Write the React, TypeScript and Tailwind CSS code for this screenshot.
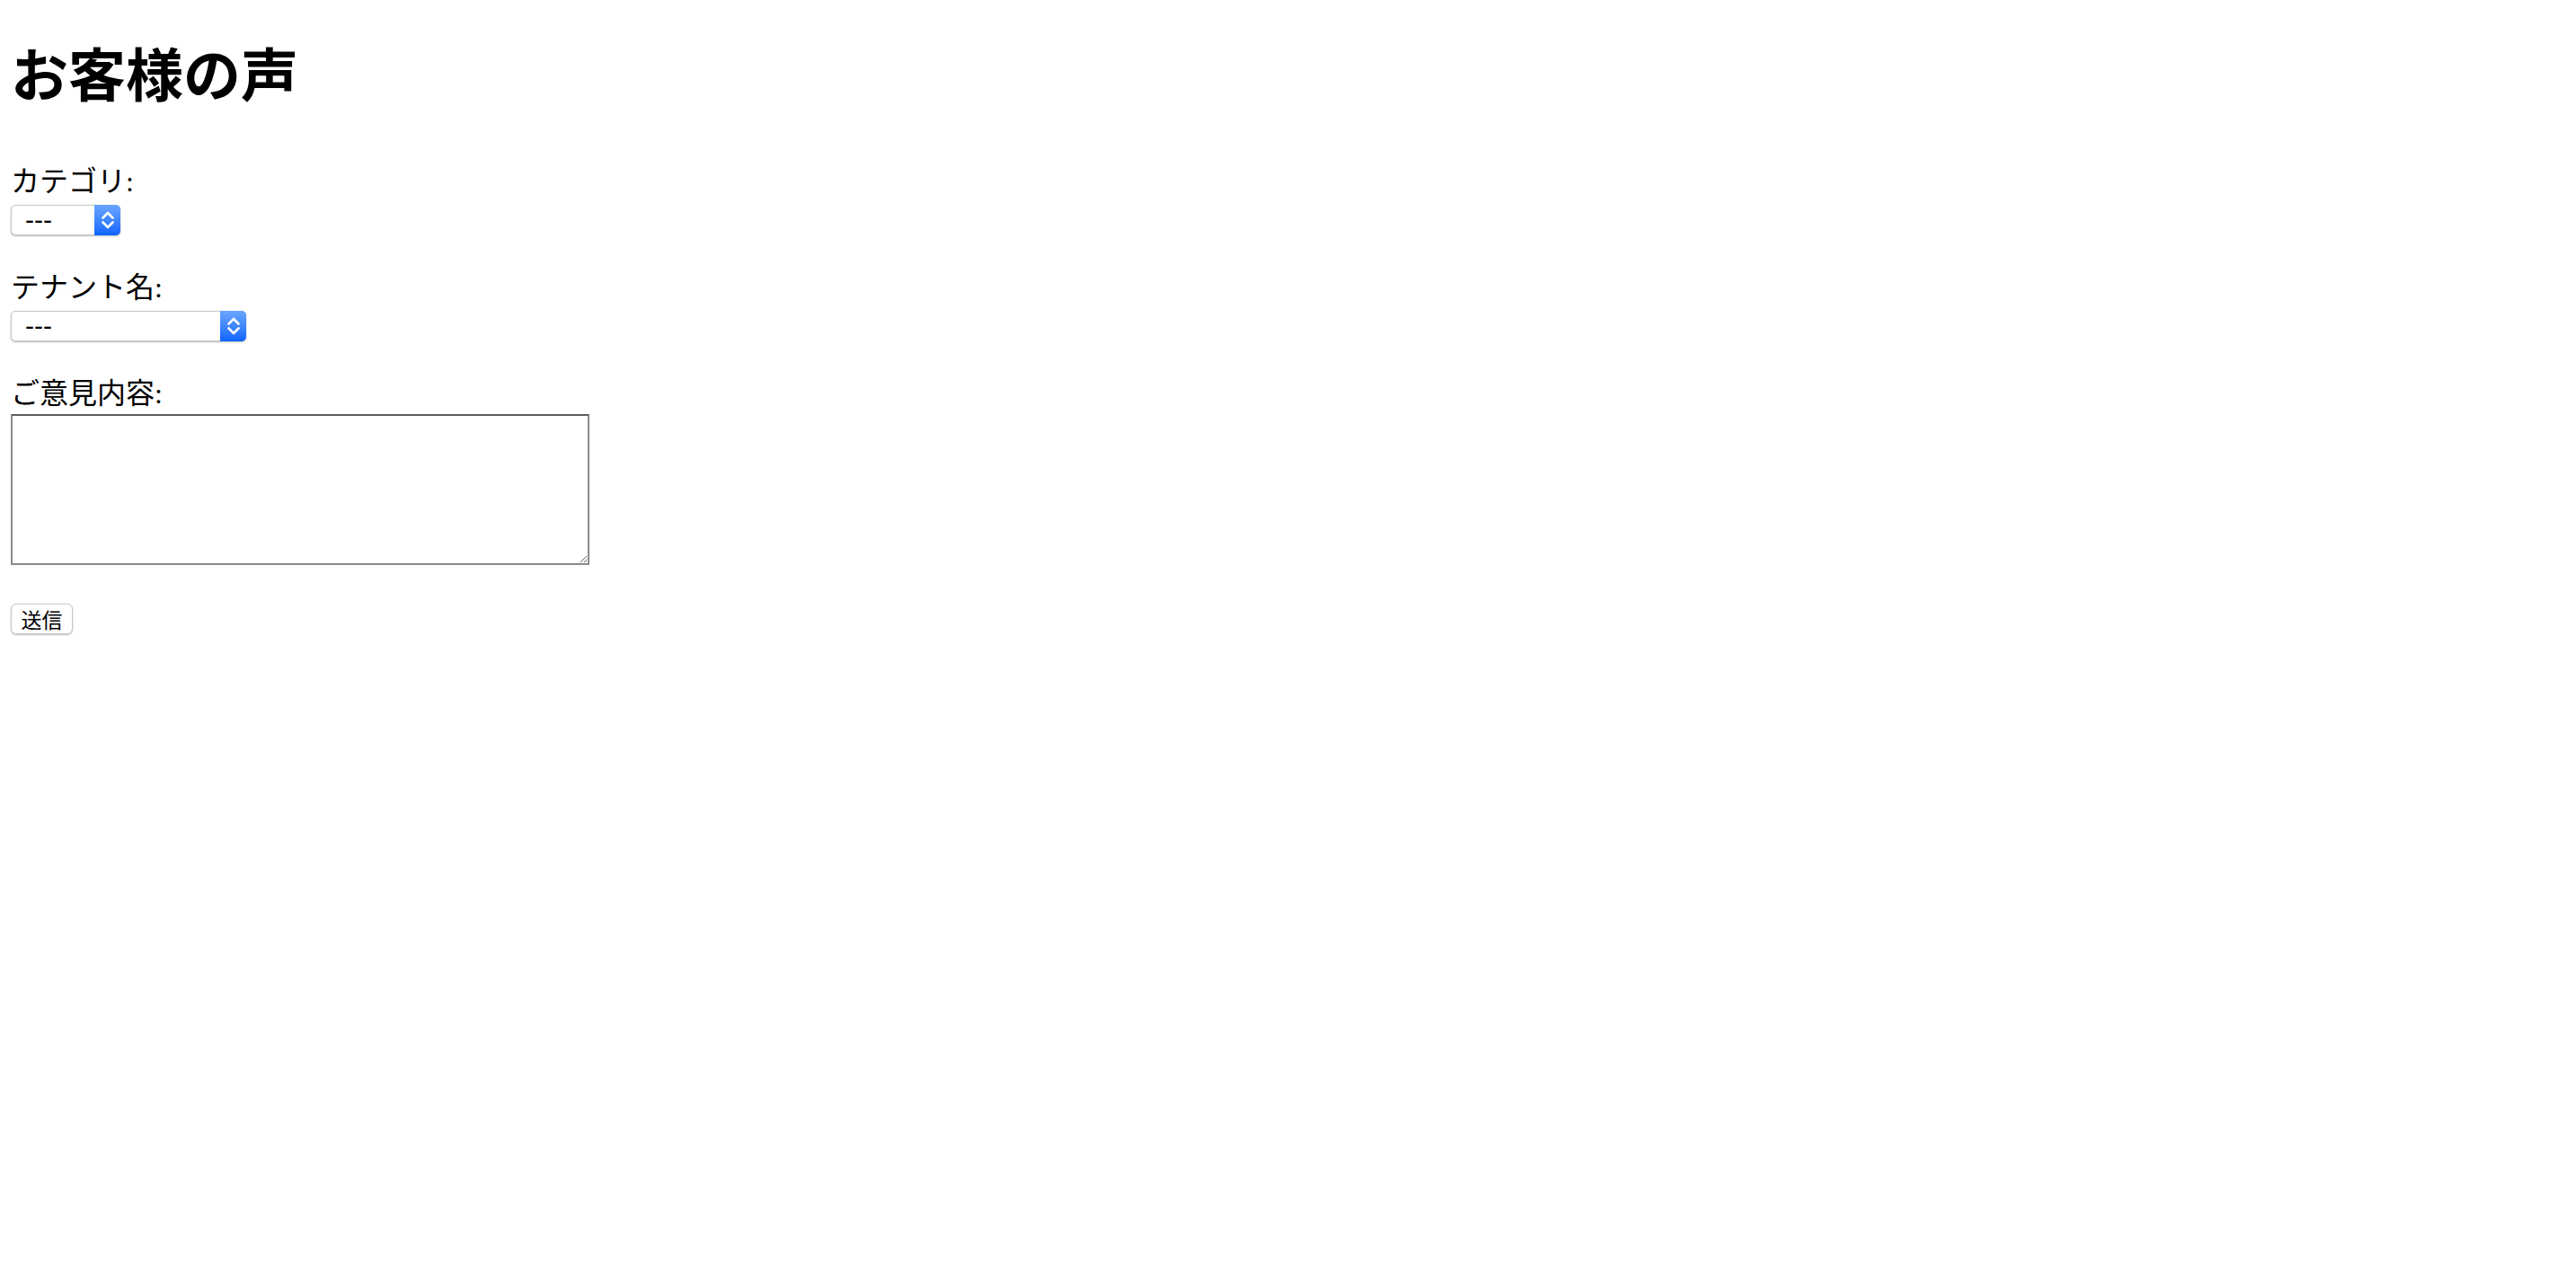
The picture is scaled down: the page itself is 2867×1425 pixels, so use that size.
import { useState } from 'react'

const serif = 'font-["Liberation_Serif","Noto_Sans_CJK_JP",serif]'

function Chevrons() {
  return (
    <svg width="14" height="22" viewBox="0 0 14 22" fill="none">
      <path d="M1.5 8.5 L7 3 L12.5 8.5" stroke="white" strokeWidth="2.6" strokeLinecap="round" strokeLinejoin="round" />
      <path d="M1.5 13.5 L7 19 L12.5 13.5" stroke="white" strokeWidth="2.6" strokeLinecap="round" strokeLinejoin="round" />
    </svg>
  )
}

function MacSelect({ width, value, onChange }: { width: string; value: string; onChange: (v: string) => void }) {
  return (
    <div className={`relative h-[34px] ${width} rounded-[5px] border border-[#c6c6c6] bg-white shadow-[0_1px_2px_rgba(0,0,0,0.28)]`}>
      <select
        value={value}
        onChange={(e) => onChange(e.target.value)}
        className='h-full w-full appearance-none bg-transparent pl-[15px] pr-[36px] text-[30px] leading-none text-black outline-none font-["Liberation_Sans","Noto_Sans_CJK_JP",sans-serif]'
      >
        <option value="">---</option>
      </select>
      <div className="pointer-events-none absolute -top-px -right-px -bottom-px flex w-[29px] items-center justify-center rounded-r-[5px] bg-gradient-to-b from-[#6ba6ff] to-[#0b63ff]">
        <Chevrons />
      </div>
    </div>
  )
}

export default function App() {
  const [category, setCategory] = useState('')
  const [tenant, setTenant] = useState('')
  const [message, setMessage] = useState('')

  return (
    <div className={`min-h-screen bg-white pl-[12px] text-black ${serif}`}>
      <h1 className="pt-[54px] text-[64px] font-bold leading-[63px]">お客様の声</h1>

      <form onSubmit={(e) => e.preventDefault()}>
        <label className="mt-[70px] block text-[32px] leading-[30px]">カテゴリ:</label>
        <div className="mt-[11px]">
          <MacSelect width="w-[122px]" value={category} onChange={setCategory} />
        </div>

        <label className="mt-[43px] block text-[32px] leading-[30px]">テナント名:</label>
        <div className="mt-[11px]">
          <MacSelect width="w-[262px]" value={tenant} onChange={setTenant} />
        </div>

        <label className="mt-[43px] block text-[32px] leading-[30px]">ご意見内容:</label>
        <textarea
          value={message}
          onChange={(e) => setMessage(e.target.value)}
          className="mt-[8px] block h-[168px] w-[644px] border-2 border-[#8a8a8a] border-t-[#5c5c5c] bg-white outline-none"
        />

        <button
          type="submit"
          className='mt-[43px] block h-[34px] w-[69px] rounded-[6px] border border-[#c8c8c8] bg-white text-[23px] leading-none text-black shadow-[0_1px_2px_rgba(0,0,0,0.25)] font-["Noto_Sans_CJK_JP",sans-serif]'
        >
          送信
        </button>
      </form>
    </div>
  )
}
